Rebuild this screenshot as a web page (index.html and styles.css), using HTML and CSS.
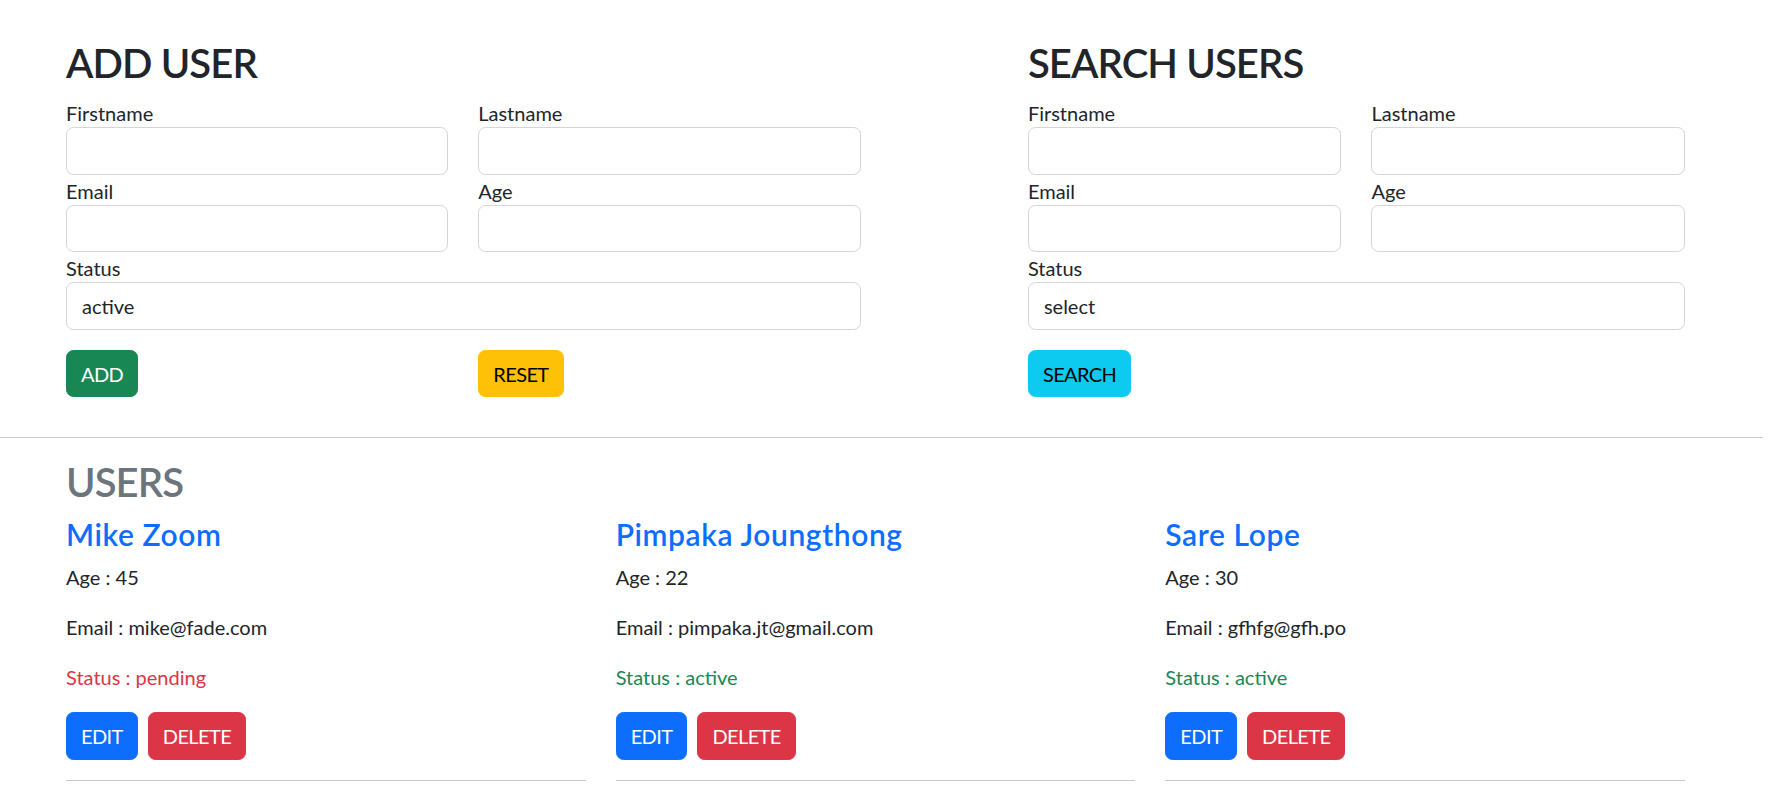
FILE: index.html
```html
<!DOCTYPE html>
<html lang="en">
<head>
<meta charset="utf-8">
<title>Users</title>
<link rel="stylesheet" href="styles.css">
</head>
<body>
<main class="page">
  <section class="top">
    <form class="panel panel-add">
      <h2 class="title">ADD USER</h2>
      <div class="fields">
        <div class="field"><label>Firstname</label><input class="control" type="text"></div>
        <div class="field"><label>Lastname</label><input class="control" type="text"></div>
        <div class="field"><label>Email</label><input class="control" type="text"></div>
        <div class="field"><label>Age</label><input class="control" type="text"></div>
        <div class="field field-wide"><label>Status</label>
          <select class="control"><option>active</option><option>pending</option></select>
        </div>
      </div>
      <div class="actions">
        <button type="button" class="btn btn-success">ADD</button>
        <button type="button" class="btn btn-warning">RESET</button>
      </div>
    </form>
    <form class="panel panel-search">
      <h2 class="title">SEARCH USERS</h2>
      <div class="fields">
        <div class="field"><label>Firstname</label><input class="control" type="text"></div>
        <div class="field"><label>Lastname</label><input class="control" type="text"></div>
        <div class="field"><label>Email</label><input class="control" type="text"></div>
        <div class="field"><label>Age</label><input class="control" type="text"></div>
        <div class="field field-wide"><label>Status</label>
          <select class="control"><option>select</option><option>active</option><option>pending</option></select>
        </div>
      </div>
      <div class="actions">
        <button type="button" class="btn btn-info">SEARCH</button>
      </div>
    </form>
  </section>

  <hr class="divider">

  <section class="users">
    <h2 class="title title-muted">USERS</h2>
    <div class="cards">
      <article class="card">
        <h4 class="name">Mike Zoom</h4>
        <p>Age : 45</p>
        <p>Email : mike@fade.com</p>
        <p class="status-pending">Status : pending</p>
        <div class="card-actions">
          <button type="button" class="btn btn-primary">EDIT</button>
          <button type="button" class="btn btn-danger">DELETE</button>
        </div>
        <hr class="card-rule">
      </article>
      <article class="card">
        <h4 class="name">Pimpaka Joungthong</h4>
        <p>Age : 22</p>
        <p>Email : pimpaka.jt@gmail.com</p>
        <p class="status-active">Status : active</p>
        <div class="card-actions">
          <button type="button" class="btn btn-primary">EDIT</button>
          <button type="button" class="btn btn-danger">DELETE</button>
        </div>
        <hr class="card-rule">
      </article>
      <article class="card">
        <h4 class="name">Sare Lope</h4>
        <p>Age : 30</p>
        <p>Email : gfhfg@gfh.po</p>
        <p class="status-active">Status : active</p>
        <div class="card-actions">
          <button type="button" class="btn btn-primary">EDIT</button>
          <button type="button" class="btn btn-danger">DELETE</button>
        </div>
        <hr class="card-rule">
      </article>
    </div>
  </section>
</main>
</body>
</html>
```

FILE: styles.css
```css
* { box-sizing: border-box; }

html, body {
  margin: 0;
  padding: 0;
  background: #fff;
}

body {
  font-family: Lato, "Open Sans", "Liberation Sans", sans-serif;
  font-size: 20px;
  line-height: 30px;
  color: #212529;
}

.page {
  width: 1790px;
  overflow: hidden;
}

.top {
  display: grid;
  grid-template-columns: repeat(12, 1fr);
  column-gap: 30px;
  width: 1619px;
  margin-left: 66px;
  padding-top: 39px;
}

.panel { margin: 0; }
.panel-add { grid-column: 1 / span 6; }
.panel-search { grid-column: 8 / span 5; }

.title {
  margin: 0 0 10px;
  font-size: 40px;
  line-height: 48px;
  font-weight: 600;
  letter-spacing: -0.9px;
  color: #212529;
}

.title-muted { color: #6c757d; }

.fields {
  display: grid;
  grid-template-columns: 1fr 1fr;
  column-gap: 30px;
}

.field { display: flex; flex-direction: column; }
.field-wide { grid-column: 1 / -1; }

.field label {
  font-size: 20px;
  line-height: 30px;
  padding-top: 1px;
  margin-bottom: -1px;
}

.control {
  display: block;
  width: 100%;
  height: 47.5px;
  margin: 0;
  padding: 7.5px 15px;
  font-family: inherit;
  font-size: 20px;
  line-height: 30px;
  color: #212529;
  background: #fff;
  border: 1px solid #d2d6db;
  border-radius: 7.5px;
  appearance: none;
  -webkit-appearance: none;
  outline: none;
}

.actions {
  display: grid;
  grid-template-columns: 1fr 1fr;
  column-gap: 30px;
  margin-top: 20px;
}

.btn {
  justify-self: start;
  display: inline-block;
  height: 47.5px;
  padding: 8px 14px 7px;
  font-family: inherit;
  font-size: 20px;
  line-height: 30px;
  font-weight: 400;
  letter-spacing: -0.6px;
  border: 1px solid transparent;
  border-radius: 7.5px;
  cursor: pointer;
}

.btn-success { background: #198754; border-color: #198754; color: #fff; }
.btn-warning { background: #ffc107; border-color: #ffc107; color: #000; }
.btn-info { background: #0dcaf0; border-color: #0dcaf0; color: #000; }
.btn-primary { background: #0d6efd; border-color: #0d6efd; color: #fff; }
.btn-danger { background: #dc3545; border-color: #dc3545; color: #fff; }

.divider {
  width: 1763px;
  height: 0;
  margin: 40px 0 0;
  border: 0;
  border-top: 1px solid #c8c9ca;
}

.users {
  width: 1619px;
  margin-left: 66px;
  padding-top: 20px;
}

.cards {
  display: grid;
  grid-template-columns: repeat(3, 1fr);
  column-gap: 30px;
}

.name {
  margin: 0 0 10px;
  padding-top: 1px;
  font-size: 30px;
  line-height: 35px;
  font-weight: 600;
  letter-spacing: 0.6px;
  color: #0d6efd;
}

.card p {
  margin: 0 0 20px;
  padding-top: 1px;
  line-height: 29px;
}

.status-pending { color: #dc3545; }
.status-active { color: #198754; }

.card-actions {
  display: flex;
  gap: 10px;
}

.card-rule {
  height: 0;
  margin: 20px 0 0;
  border: 0;
  border-top: 1px solid #c8c9ca;
}
```
